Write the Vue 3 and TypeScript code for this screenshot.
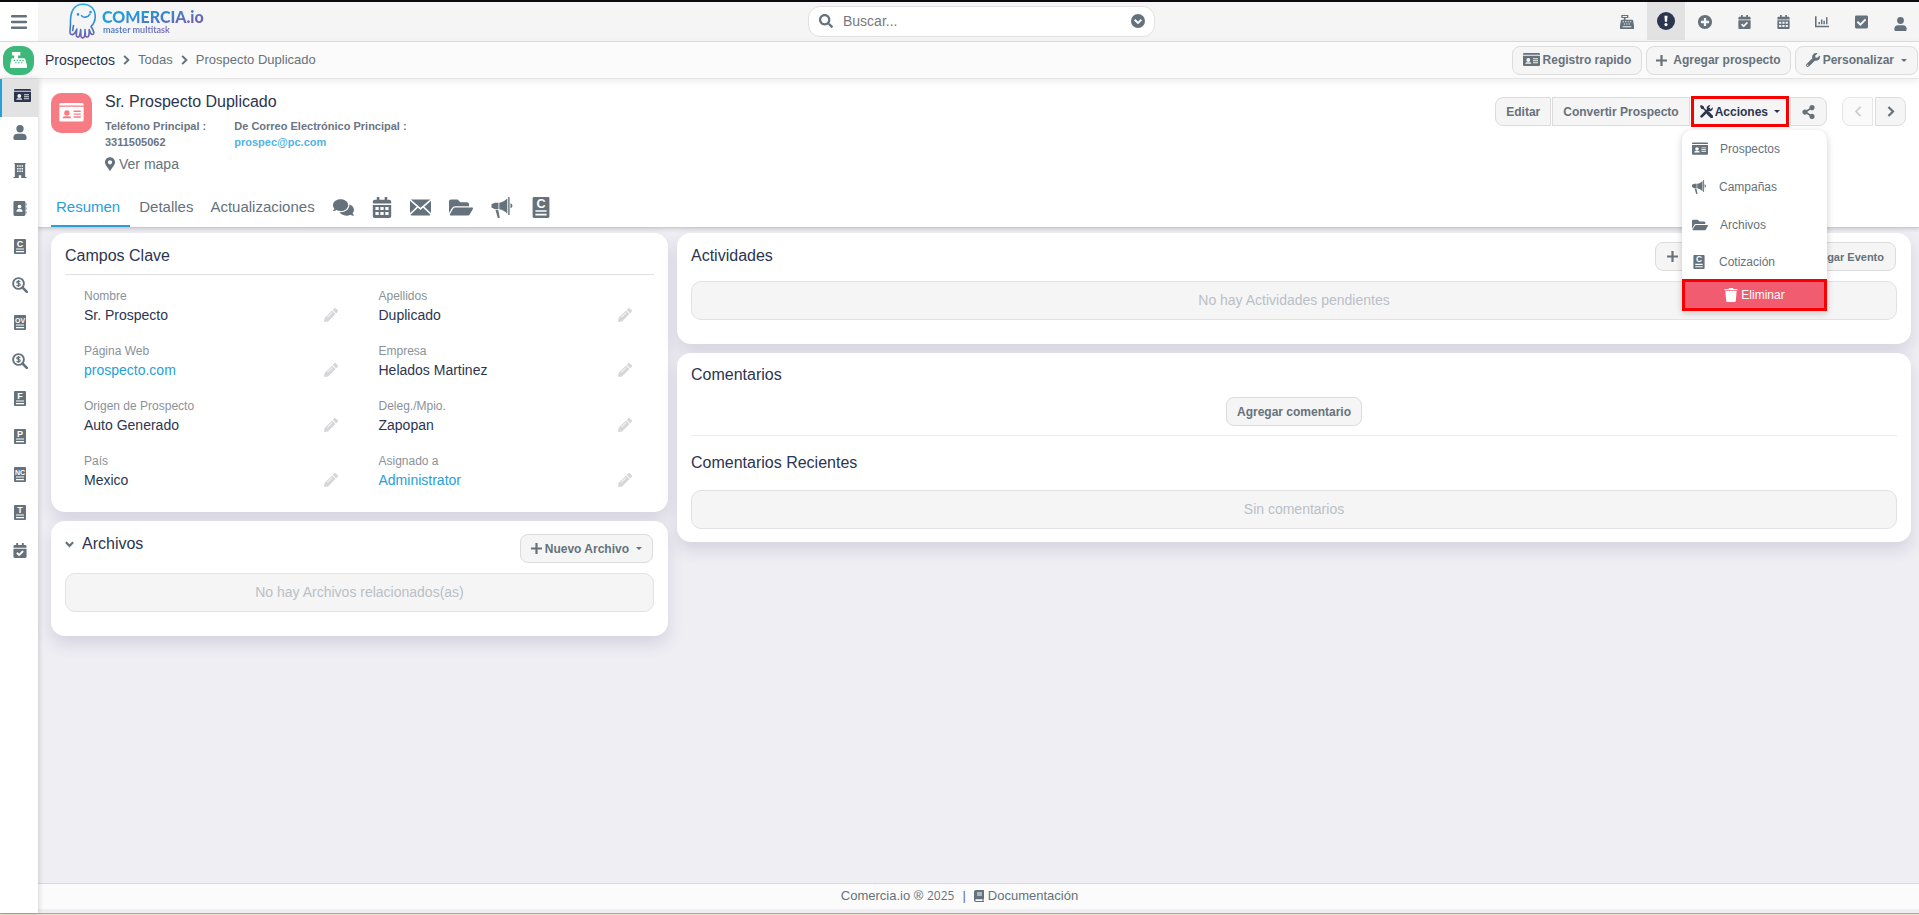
<script setup lang="ts">
import { h, ref } from 'vue'

interface Glyph { box: string; body: string }

const doc = (letters: string, size: number): Glyph => ({
  box: '0 0 12 15',
  body: `<path d="M1 0h10a1 1 0 0 1 1 1v13a1 1 0 0 1-1 1H1a1 1 0 0 1-1-1V1a1 1 0 0 1 1-1z"/><path d="M2 9.4h8v1.2H2zM2 12h8v1.2H2z" fill="#fff"/><text x="6" y="7.8" text-anchor="middle" font-family="Liberation Sans, Arial, sans-serif" font-weight="700" font-size="${size}" fill="#fff">${letters}</text>`,
})

const glyphs: Record<string, Glyph> = {
  menu: { box: '0 0 16 14', body: '<path d="M1 0h14a1 1 0 0 1 0 2.5H1A1 1 0 0 1 1 0zM1 5.7h14a1 1 0 0 1 0 2.5H1a1 1 0 0 1 0-2.5zM1 11.4h14a1 1 0 0 1 0 2.5H1a1 1 0 0 1 0-2.5z"/>' },
  search: { box: '0 0 512 512', body: '<path d="M505 442.7L405.3 343c-4.5-4.5-10.6-7-17-7H372c27.6-35.3 44-79.7 44-128C416 93.1 322.9 0 208 0S0 93.1 0 208s93.1 208 208 208c48.3 0 92.7-16.4 128-44v16.3c0 6.4 2.5 12.5 7 17l99.7 99.7c9.4 9.4 24.6 9.4 33.9 0l28.3-28.3c9.4-9.4 9.4-24.6.1-34zM208 336c-70.7 0-128-57.2-128-128 0-70.7 57.2-128 128-128 70.7 0 128 57.2 128 128 0 70.7-57.2 128-128 128z"/>' },
  searchMoney: { box: '0 0 16 16', body: '<circle cx="6.5" cy="6.5" r="5.4" fill="none" stroke="currentColor" stroke-width="1.9"/><path d="M10.6 10.6l4.2 4.2" stroke="currentColor" stroke-width="2.6" stroke-linecap="round"/><path d="M8.3 4.9c-.4-.6-1-.8-1.8-.8-1.1 0-1.8.5-1.8 1.2 0 1.6 3.6.7 3.6 2.4 0 .8-.8 1.2-1.8 1.2-.9 0-1.6-.3-1.9-1M6.5 3v7" fill="none" stroke="currentColor" stroke-width="1.2"/>' },
  circleDown: { box: '0 0 16 16', body: '<circle cx="8" cy="8" r="8"/><path d="M4.2 6.6L8 10.3l3.8-3.7" fill="none" stroke="#fff" stroke-width="2.2"/>' },
  register: { box: '0 0 16 16', body: '<path fill-rule="evenodd" d="M1.5 0h8v3.4H6.3v1.9H14c.5 0 .8.3.9.8L16 12v3c0 .6-.4 1-1 1H1c-.6 0-1-.4-1-1v-3l1.1-5.9c.1-.5.4-.8.9-.8h2.4V3.400H1.500zM3 1.200v1h5v-1zM3 7.100v1.300h1.400V7.100zM5.800 7.100v1.300h1.400V7.100zM8.600 7.100v1.300H10V7.100zM11.400 7.100v1.300h1.400V7.100zM4.400 9.600v1.300h1.400V9.600zM7.200 9.600v1.300h1.400V9.600zM10 9.600v1.300h1.400V9.600zM3 12.800v1.200h10v-1.200z"/>' },
  registerWhite: { box: '0 0 18 17', body: '<path fill-rule="evenodd" d="M2 0h9v3.600H8.500v3H15c.6 0 1 .3 1.100.9L18 14v2c0 .6-.4 1-1 1H1c-.6 0-1-.4-1-1v-2l1.500-6.500c.1-.6.500-.9 1.100-.9h1.900v-3H2zM4 8.300v1.200h1.500V8.300zM7 8.300v1.200h1.500V8.300zM10 8.300v1.200h1.500V8.300zM13 8.300v1.200h1.500V8.300zM5.500 10.800V12H7v-1.200zM8.500 10.800V12H10v-1.200zM11.500 10.800V12H13v-1.200z"/>' },
  alert: { box: '0 0 18 18', body: '<circle cx="9" cy="9" r="9"/><path d="M7.500 3.800h3l-.4 6H7.900z" fill="#fff"/><circle cx="9" cy="12.600" r="1.600" fill="#fff"/>' },
  plusCircle: { box: '8 8 496 496', body: '<path d="M256 8C119 8 8 119 8 256s111 248 248 248 248-111 248-248S393 8 256 8zm144 276c0 6.600-5.400 12-12 12h-92v92c0 6.600-5.400 12-12 12h-56c-6.600 0-12-5.400-12-12v-92h-92c-6.600 0-12-5.400-12-12v-56c0-6.600 5.400-12 12-12h92v-92c0-6.600 5.400-12 12-12h56c6.600 0 12 5.400 12 12v92h92c6.600 0 12 5.400 12 12v56z"/>' },
  calCheck: { box: '0 0 448 512', body: '<path d="M436 160H12c-6.600 0-12-5.400-12-12v-36c0-26.500 21.500-48 48-48h48V12c0-6.600 5.400-12 12-12h40c6.600 0 12 5.400 12 12v52h128V12c0-6.600 5.400-12 12-12h40c6.600 0 12 5.400 12 12v52h48c26.500 0 48 21.500 48 48v36c0 6.600-5.400 12-12 12zM12 192h424c6.600 0 12 5.400 12 12v260c0 26.500-21.500 48-48 48H48c-26.500 0-48-21.500-48-48V204c0-6.600 5.400-12 12-12zm333.300 95.900l-28.200-28.400c-4.600-4.700-12.200-4.700-16.900 0L194.100 364.700l-46-46.400c-4.600-4.700-12.200-4.700-16.900 0l-28.400 28.100c-4.700 4.700-4.700 12.300-.1 17l82.600 83.300c4.700 4.700 12.300 4.700 17 0l143-141.800c4.700-4.700 4.700-12.300 0-17z"/>' },
  calendar: { box: '0 0 448 512', body: '<path fill-rule="evenodd" d="M12 160h424c6.600 0 12-5.400 12-12v-36c0-26.500-21.500-48-48-48h-48V12c0-6.600-5.400-12-12-12h-40c-6.600 0-12 5.400-12 12v52H160V12c0-6.600-5.400-12-12-12h-40c-6.600 0-12 5.400-12 12v52H48C21.500 64 0 85.500 0 112v36c0 6.600 5.400 12 12 12zM0 192h448v272c0 26.500-21.500 48-48 48H48c-26.500 0-48-21.500-48-48zM64 246v72h80v-72zM184 246v72h80v-72zM304 246v72h80v-72zM64 366v72h80v-72zM184 366v72h80v-72zM304 366v72h80v-72z"/>' },
  chart: { box: '0 0 16 13', body: '<path d="M0 0h1.800v10.800H16V12.600H0zM4 6.600h1.700V9H4zM6.800 3.600h1.700V9H6.800zM9.600 5h1.700v4H9.600zM12.600 1h1.700v8h-1.700z"/>' },
  checkSquare: { box: '0 32 448 448', body: '<path d="M400 480H48c-26.500 0-48-21.500-48-48V80c0-26.500 21.500-48 48-48h352c26.500 0 48 21.500 48 48v352c0 26.500-21.500 48-48 48zm-204.700-98.100l184-184c6.200-6.200 6.200-16.300 0-22.600l-22.600-22.600c-6.300-6.300-16.400-6.300-22.700 0L184 302.700l-70.100-70c-6.200-6.300-16.300-6.300-22.600 0l-22.600 22.600c-6.300 6.300-6.300 16.400 0 22.600l104 104c6.300 6.300 16.400 6.300 22.600 0z"/>' },
  user: { box: '0 0 14 16', body: '<circle cx="7" cy="4" r="3.900"/><path d="M4 9.400h6c2.400 0 4 1.600 4 3.800v1.300c0 .8-.6 1.500-1.500 1.500h-11C.6 16 0 15.300 0 14.500v-1.300c0-2.200 1.600-3.800 4-3.800z"/>' },
  building: { box: '0 0 14 16', body: '<path fill-rule="evenodd" d="M1 0h12v1h-.5v14H14v1H8.300v-3H5.700v3H0v-1h1.500V1H1zM3.900 2.500V4h1.500V2.500zM6.300 2.500V4h1.500V2.500zM8.700 2.500V4h1.500V2.500zM3.900 5.300v1.500h1.500V5.300zM6.300 5.300v1.500h1.500V5.300zM8.700 5.300v1.500h1.500V5.300zM3.900 8.100v1.500h1.500V8.100zM6.300 8.100v1.500h1.500V8.100zM8.700 8.100v1.500h1.500V8.100z"/>' },
  addressBook: { box: '0 0 14 16', body: '<path d="M1.500 0h9.800c.8 0 1.500.7 1.500 1.500v13c0 .8-.7 1.500-1.500 1.500H1.500C.7 16 0 15.300 0 14.500v-13C0 .7.700 0 1.500 0zM13.200 2.500h.5c.4 0 .4 2.500 0 2.500h-.5zM13.200 6.700h.5c.4 0 .4 2.500 0 2.500h-.5zM13.200 11h.5c.4 0 .4 2.500 0 2.500h-.5z"/><circle cx="6.500" cy="5.900" r="2" fill="#fff"/><path d="M3.200 11.500c0-1.900 1.300-2.900 2.400-2.900h1.800c1.100 0 2.400 1 2.400 2.900z" fill="#fff"/>' },
  card: { box: '0 0 17 14', body: '<path fill-rule="evenodd" d="M1 0h15a1 1 0 0 1 1 1v.7H0V1a1 1 0 0 1 1-1zM0 2.700h17V12a1 1 0 0 1-1 1H1a1 1 0 0 1-1-1zM3.600 9.200c-.8.200-1.300.7-1.300 1.500h6c0-.8-.5-1.300-1.300-1.500zM10 5.300v1h5v-1zM10 7.300v1h5v-1zM10 9.300v1h5v-1z"/><circle cx="5.300" cy="7" r="1.900" class="knock"/>' },
  docC: doc('C', 9),
  docOV: doc('OV', 7),
  docF: doc('F', 9),
  docP: doc('P', 9),
  docNC: doc('NC', 7),
  docT: doc('T', 9),
  plus: { box: '0 0 13 13', body: '<path d="M5.200 0h2.600v5.200H13v2.600H7.800V13H5.200V7.800H0V5.200h5.200z"/>' },
  wrench: { box: '0 0 512 512', body: '<path d="M507.700 109.100c-2.200-9-13.500-12.100-20.100-5.500l-74.400 74.400-67.800-11.400-11.400-67.800 74.400-74.400c6.600-6.600 3.400-17.900-5.700-20.200-47.400-11.700-99.500.9-136.600 38-39.600 39.600-50.500 97.100-34 147.200L18.700 402.800c-25 25-25 65.500 0 90.500s65.500 25 90.500 0l213.300-213.200c50.100 16.700 107.400 5.700 147.300-34.200 37.100-37.100 49.700-89.400 37.900-136.800zM64 472c-13.300 0-24-10.800-24-24 0-13.300 10.800-24 24-24s24 10.700 24 24c0 13.200-10.700 24-24 24z"/>' },
  tools: { box: '0 0 13 13', body: '<path d="M1.800 1.800l9.400 9.400" stroke="currentColor" stroke-width="1.500"/><path d="M8 8l3.600 3.600" stroke="currentColor" stroke-width="3.200" stroke-linecap="round"/><path d="M0 1l1-1 2.600 1.300.5 1.700-1.200 1.200-1.700-.5z"/><path d="M1.600 11.400L9 4" stroke="currentColor" stroke-width="2.600" stroke-linecap="round"/><path d="M12.700 2.300l-2 2-1.700-.3-.3-1.700 2-2C9.300 0 7.600.3 6.900 1.900c-.5 1.200-.2 2.400.6 3.300s2.300 1.200 3.500.7c1.600-.7 2.100-2.300 1.700-3.600z"/>' },
  share: { box: '0 0 448 512', body: '<path d="M352 320c-22.600 0-43.400 7.800-59.800 20.900l-102.500-64.100a96.600 96.600 0 0 0 0-41.600l102.500-64.100C308.600 184.200 329.400 192 352 192c53 0 96-43 96-96S405 0 352 0s-96 43-96 96c0 7.200.8 14.100 2.300 20.800l-102.500 64.100C139.400 167.800 118.600 160 96 160c-53 0-96 43-96 96s43 96 96 96c22.600 0 43.400-7.800 59.800-20.900l102.500 64.100A96.300 96.300 0 0 0 256 416c0 53 43 96 96 96s96-43 96-96-43-96-96-96z"/>' },
  left: { box: '0 0 8 12', body: '<path d="M6.800 1L1.800 6l5 5" fill="none" stroke="currentColor" stroke-width="1.800"/>' },
  right: { box: '0 0 8 12', body: '<path d="M1.200 1l5 5-5 5" fill="none" stroke="currentColor" stroke-width="2.400"/>' },
  down: { box: '0 0 10 7', body: '<path d="M1 1l4 4 4-4" fill="none" stroke="currentColor" stroke-width="2.400"/>' },
  marker: { box: '0 0 384 512', body: '<path d="M172.300 501.700C27 291 0 269.400 0 192 0 86 86 0 192 0s192 86 192 192c0 77.400-27 99-172.300 309.700-9.500 13.700-29.900 13.700-39.400 0zM192 272c44.200 0 80-35.800 80-80s-35.800-80-80-80-80 35.800-80 80 35.800 80 80 80z"/>' },
  comments: { box: '0 32 576 448', body: '<path d="M416 192c0-88.400-93.100-160-208-160S0 103.600 0 192c0 34.300 14.100 65.900 38 92-13.400 30.200-35.500 54.200-35.800 54.500-2.200 2.300-2.800 5.700-1.500 8.700S4.800 352 8 352c36.600 0 66.900-12.300 88.700-25 32.200 15.700 70.300 25 111.300 25 114.900 0 208-71.600 208-160zm122 220c23.900-26 38-57.700 38-92 0-66.900-53.500-124.200-129.300-148.100.9 6.600 1.300 13.300 1.300 20.100 0 105.900-107.700 192-240 192-10.800 0-21.300-.8-31.700-1.900C207.800 439.600 281.800 480 368 480c41 0 79.100-9.200 111.300-25 21.800 12.700 52.100 25 88.700 25 3.200 0 6.100-1.900 7.300-4.800 1.300-2.900.7-6.300-1.500-8.700-.3-.3-22.400-24.200-35.800-54.500z"/>' },
  envelope: { box: '0 0 21 16', body: '<path d="M.8 0h19.400L10.500 8.300zM0 1.200l6.700 6L0 13.400zM21 1.200v12.200l-6.700-6.200zM7.900 8.200l2.600 2.200 2.600-2.200 7.400 7.100c-.2.400-.6.700-1.100.7H1.600c-.5 0-.9-.3-1.100-.7z"/>' },
  folder: { box: '0 64 576 384', body: '<path d="M572.700 292.100l-72.400 124.100A64 64 0 0 1 445 448H45c-18.500 0-30-20.100-20.700-36.100l72.400-124.100A64 64 0 0 1 152 256h400c18.500 0 30 20.100 20.700 36.100zM152 224h328v-48c0-26.500-21.500-48-48-48H272l-64-64H48C21.500 64 0 85.500 0 112v278l69.100-118.400C86.200 242.300 118 224 152 224z"/>' },
  bullhorn: { box: '0 0 21 21', body: '<path d="M3.500 5.800H7v6.500H3.500L0 10.500V7.300zM7.800 5.800c3-.5 5.700-2 8-4.300v15.200c-2.300-2.300-5-3.800-8-4.400zM16.700 0h1.400v18h-1.400zM19 6.300c2.600.8 2.600 4.300 0 5zM4 13h2.700l1.600 7.800-2 .2z"/>' },
  pencil: { box: '0 0 512 512', body: '<path fill-rule="evenodd" d="M497.900 142.100l-46.100 46.100c-4.700 4.700-12.300 4.700-17 0l-111-111c-4.700-4.700-4.700-12.300 0-17l46.100-46.100c18.700-18.700 49.100-18.700 67.900 0l60.100 60.100c18.800 18.700 18.800 49.100 0 67.900zM284.200 99.800L21.600 362.400.4 483.900c-2.900 16.400 11.400 30.600 27.800 27.800l121.500-21.300 262.600-262.600c4.700-4.700 4.700-12.300 0-17l-111-111c-4.800-4.700-12.400-4.700-17.100 0zM124.100 339.900c-5.500-5.500-5.500-14.300 0-19.800l154-154c5.500-5.500 14.300-5.500 19.800 0s5.500 14.300 0 19.800l-154 154c-5.500 5.500-14.300 5.500-19.800 0z"/>' },
  trash: { box: '0 0 14 15', body: '<path d="M5 0h4l.6 1H14v1.500H0V1h4.400zM1 3.300h12l-.8 10.400c-.1.800-.6 1.300-1.400 1.300H3.200c-.8 0-1.300-.5-1.400-1.300z"/>' },
  book: { box: '0 0 10 12', body: '<path fill-rule="evenodd" d="M2 0h7.500c.3 0 .5.200.5.500V9l-.5.500V11h.5v1H2c-1.100 0-2-.9-2-2V2C0 .9.900 0 2 0zM3 2.500v1h5v-1zM3 4.500v1h5v-1zM2 9.300c-.9 0-.9 1.600 0 1.600h6.500V9.300z"/>' },
}

const Icon = (props: { name: string }) =>
  h('svg', {
    class: ['icon', 'i-' + props.name],
    viewBox: glyphs[props.name].box,
    fill: 'currentColor',
    'aria-hidden': 'true',
    innerHTML: glyphs[props.name].body,
  })
Icon.props = ['name']

const modules = [
  ['card', 'Prospectos'], ['user', 'Contactos'], ['building', 'Cuentas'], ['addressBook', 'Agenda'],
  ['docC', 'Cotizaciones'], ['searchMoney', 'Oportunidades'], ['docOV', 'Órdenes de venta'],
  ['searchMoney', 'Pagos'], ['docF', 'Facturas'], ['docP', 'Pedidos'], ['docNC', 'Notas de crédito'],
  ['docT', 'Tickets'], ['calCheck', 'Tareas'],
]
const tools = [
  ['register', 'Punto de venta'], ['alert', 'Avisos'], ['plusCircle', 'Crear'], ['calCheck', 'Tareas'],
  ['calendar', 'Calendario'], ['chart', 'Reportes'], ['checkSquare', 'Pendientes'], ['user', 'Usuario'],
]
const relatedTabs = [
  ['comments', 'Comentarios'], ['calendar', 'Actividades'], ['envelope', 'Correos'],
  ['folder', 'Archivos'], ['bullhorn', 'Campañas'], ['docC', 'Cotización'],
]
const menuItems = [
  ['card', 'Prospectos'], ['bullhorn', 'Campañas'], ['folder', 'Archivos'], ['docC', 'Cotización'],
]
const fields = [
  { label: 'Nombre', value: 'Sr. Prospecto' },
  { label: 'Apellidos', value: 'Duplicado' },
  { label: 'Página Web', value: 'prospecto.com', link: true },
  { label: 'Empresa', value: 'Helados Martinez' },
  { label: 'Origen de Prospecto', value: 'Auto Generado' },
  { label: 'Deleg./Mpio.', value: 'Zapopan' },
  { label: 'País', value: 'Mexico' },
  { label: 'Asignado a', value: 'Administrator', link: true },
]

const query = ref('')
const menuOpen = ref(true)
</script>

<template>
  <div class="page">
    <div class="strip-top"></div>
    <header class="topbar">
      <button class="burger" aria-label="Menú"><Icon name="menu" /></button>
      <a class="brand" href="#">
        <svg class="squid" viewBox="0 0 30 36" fill="none" stroke="url(#ink)" stroke-width="1.600" stroke-linecap="round" stroke-linejoin="round" aria-hidden="true">
          <defs>
            <linearGradient id="ink" x1="0" y1="0" x2="0" y2="36" gradientUnits="userSpaceOnUse">
              <stop offset="0" stop-color="#25b0e6" /><stop offset=".55" stop-color="#2f86cc" /><stop offset="1" stop-color="#7a5cb0" />
            </linearGradient>
          </defs>
          <path d="M3.500 21C3 9 6.500 1.200 16 1.200c8 0 12.300 5.500 12.200 12.500 0 4.300-1.500 7.300-4.200 9.800 1.700 2.500 3 4.800 2.800 6.700-.3 1.800-2.800 1.600-3.300-.2l-1.300-3.500c-.2 3 .2 5.300-.7 6.800-.9 1.300-2.900.8-3.100-.9l-.4-5.900c-.1 3.500.2 6-1 7.700-1.100 1.200-3 .6-3.100-1.300l-.2-6.400c-.5 3.200-.5 5.500-1.600 7-1.100 1.200-2.900.3-2.800-1.400l.5-6c-1 2.600-2.200 5-4.200 5.500-2.200.2-2.800-1.200-2.600-3.300z" />
          <path d="M14.500 12.600c1.500 2.300 6.300 2.300 8.200-1.300M6.500 22.500l-.8 5" />
          <path d="M11 11.200v.3M23.500 9v.3" stroke-width="2.600" />
        </svg>
        <span class="brand-text">
          <span class="brand-name">COMERCIA.io</span>
          <span class="brand-sub">master multitask</span>
        </span>
      </a>
      <div class="search">
        <Icon name="search" />
        <input v-model="query" type="text" placeholder="Buscar..." aria-label="Buscar" />
        <button aria-label="Búsqueda avanzada"><Icon name="circleDown" /></button>
      </div>
      <nav class="tools">
        <button v-for="t in tools" :key="t[1]" :class="{ on: t[0] === 'alert' }" :aria-label="t[1]"><Icon :name="t[0]" /></button>
      </nav>
    </header>

    <div class="crumbbar">
      <span class="badge"><Icon name="registerWhite" /></span>
      <nav class="crumbs">
        <a class="first" href="#">Prospectos</a><Icon name="right" />
        <a href="#">Todas</a><Icon name="right" />
        <span>Prospecto Duplicado</span>
      </nav>
      <div class="crumb-actions">
        <button class="btn"><Icon name="card" />Registro rapido</button>
        <button class="btn wide"><Icon name="plus" />Agregar prospecto</button>
        <button class="btn"><Icon name="wrench" />Personalizar<i class="caret"></i></button>
      </div>
    </div>

    <div class="body">
      <nav class="sidebar">
        <a v-for="(m, i) in modules" :key="i" href="#" :class="{ on: i === 0 }" :aria-label="m[1]"><Icon :name="m[0]" /></a>
      </nav>

      <div class="content">
        <section class="record">
          <div class="record-top">
            <span class="avatar"><Icon name="card" /></span>
            <div class="identity">
              <h1>Sr. Prospecto Duplicado</h1>
              <div class="contact">
                <div><span>Teléfono Principal :</span><span>3311505062</span></div>
                <div><span>De Correo Electrónico Principal :</span><a href="#">prospec@pc.com</a></div>
              </div>
              <a class="map" href="#"><Icon name="marker" />Ver mapa</a>
            </div>
            <div class="record-actions">
              <div class="group">
                <button class="btn">Editar</button>
                <button class="btn">Convertir Prospecto</button>
                <div class="dropdown">
                  <button class="btn marked" :aria-expanded="menuOpen" @click="menuOpen = !menuOpen"><Icon name="tools" />Acciones<i class="caret"></i></button>
                  <div v-if="menuOpen" class="menu">
                    <a v-for="m in menuItems" :key="m[1]" href="#"><Icon :name="m[0]" />{{ m[1] }}</a>
                    <button class="delete"><Icon name="trash" />Eliminar</button>
                  </div>
                </div>
                <button class="btn" aria-label="Compartir"><Icon name="share" /></button>
              </div>
              <div class="group pager">
                <button class="btn" disabled aria-label="Anterior"><Icon name="left" /></button>
                <button class="btn" aria-label="Siguiente"><Icon name="right" /></button>
              </div>
            </div>
          </div>
          <nav class="tabs">
            <a class="on" href="#">Resumen</a>
            <a href="#">Detalles</a>
            <a href="#">Actualizaciones</a>
            <span class="related">
              <a v-for="t in relatedTabs" :key="t[1]" href="#" :aria-label="t[1]"><Icon :name="t[0]" /></a>
            </span>
          </nav>
        </section>

        <main class="columns">
          <div class="column">
            <section class="panel keyfields">
              <h2>Campos Clave</h2>
              <dl>
                <div v-for="f in fields" :key="f.label">
                  <dt>{{ f.label }}</dt>
                  <dd><a v-if="f.link" href="#">{{ f.value }}</a><template v-else>{{ f.value }}</template></dd>
                  <button :aria-label="'Editar ' + f.label"><Icon name="pencil" /></button>
                </div>
              </dl>
            </section>
            <section class="panel files">
              <div class="panel-head">
                <h2><Icon name="down" />Archivos</h2>
                <button class="btn"><Icon name="plus" />Nuevo Archivo<i class="caret"></i></button>
              </div>
              <p class="empty">No hay Archivos relacionados(as)</p>
            </section>
          </div>
          <div class="column">
            <section class="panel activities">
              <div class="panel-head">
                <h2>Actividades</h2>
                <div class="buttons">
                  <button class="btn small"><Icon name="plus" />Agregar Tarea</button>
                  <button class="btn small"><Icon name="plus" />Agregar Evento</button>
                </div>
              </div>
              <p class="empty">No hay Actividades pendientes</p>
            </section>
            <section class="panel comments">
              <h2>Comentarios</h2>
              <div class="add"><button class="btn">Agregar comentario</button></div>
              <h2 class="recent">Comentarios Recientes</h2>
              <p class="empty">Sin comentarios</p>
            </section>
          </div>
        </main>

        <footer class="footer">
          <span>Comercia.io ® <small>2025</small></span>
          <span>|</span>
          <a href="#"><Icon name="book" />Documentación</a>
        </footer>
      </div>
    </div>
    <div class="strip-bottom"></div>
  </div>
</template>

<style>
body { background: #efeef3; }
.i-card .knock { fill: var(--knock, #f5f5f5); }
</style>

<style scoped>
.page {
  min-height: 100vh;
  display: flex;
  flex-direction: column;
  font-family: "Liberation Sans", Arial, sans-serif;
  font-size: 14px;
  line-height: 18px;
  color: #65727c;
  background: #efeef3;
}
.page *, .page { box-sizing: border-box; }
a { color: inherit; text-decoration: none; }
button { font: inherit; color: inherit; background: none; border: 0; padding: 0; cursor: pointer; }
h1, h2, p, dl, dd { margin: 0; font-weight: 400; }
.icon { display: block; flex: none; width: 15px; height: 15px; }
.strip-top { height: 2px; background: #0d0a0f; }
.strip-bottom { height: 2px; background: #e9e3c6; border-top: 1px solid #b3a69a; }

.topbar { display: flex; align-items: stretch; height: 40px; background: #f5f5f5; border-bottom: 1px solid #dedede; }
.burger { width: 38px; display: flex; align-items: center; justify-content: center; background: #fff; }
.burger .icon { width: 16px; height: 14px; }
.brand { display: flex; flex: 1; margin-left: 29px; gap: 5px; }
.squid { width: 30px; height: 36px; margin-top: 1px; }
.brand-text { display: flex; flex-direction: column; padding-top: 7px; font-family: Lato, "Liberation Sans", sans-serif; }
.brand-name, .brand-sub { align-self: flex-start; color: transparent; background-clip: text; -webkit-background-clip: text; }
.brand-name { font-size: 16px; line-height: 16px; font-weight: 900; background-image: linear-gradient(165deg, #1e9edb 25%, #6a62b4 85%); }
.brand-sub { font-size: 9px; line-height: 10px; font-weight: 700; margin-left: 1px; background-image: linear-gradient(90deg, #4a7fc4, #7c6bb8); }
.search { width: 347px; height: 31px; margin-top: 4px; padding: 0 9px 2px 10px; display: flex; align-items: center; gap: 10px; background: #fff; border: 1px solid #e0e0e0; border-radius: 12px; }
.search .i-search, .search .i-circleDown { width: 14px; height: 14px; }
.search input { flex: 1; min-width: 0; border: 0; outline: 0; padding: 0; background: none; font: inherit; color: inherit; }
.search input::placeholder { color: #77797c; opacity: 1; }
.tools { flex: 1; display: flex; justify-content: flex-end; gap: 1px; margin-left: 23px; }
.tools button { width: 38px; height: 38px; display: flex; align-items: center; justify-content: center; }
.tools button.on { background: #e2e2e2; color: #2c3550; }
.tools .icon { width: 13px; height: 14px; margin-top: 2px; }
.tools .i-alert { width: 18px; height: 18px; margin-top: 0; }
.tools .i-register, .tools .i-chart { width: 14px; }
.tools .i-plusCircle { width: 14px; }
.tools .i-user { margin-top: 5px; }

.crumbbar { display: flex; align-items: center; height: 37px; padding: 0 1px 0 3px; background: #fbfbfb; border-bottom: 1px solid #e4e4e4; box-shadow: 0 2px 8px rgba(0, 0, 0, 0.08); position: relative; }
.badge { display: flex; align-items: center; justify-content: center; width: 31px; height: 29px; border-radius: 12px; background: #3cb87b; color: #fff; }
.badge .icon { width: 17px; height: 16px; }
.crumbs { display: flex; align-items: center; margin-left: 11px; font-size: 13px; flex: 1; }
.crumbs .first { font-size: 14px; color: #2c3550; }
.crumbs .icon { width: 7px; height: 10px; margin: 0 8px; }
.crumb-actions { display: flex; gap: 4px; }

.btn { display: inline-flex; align-items: center; justify-content: center; gap: 3px; height: 29px; padding: 0 10px; font-size: 12px; font-weight: 700; line-height: 16px; color: #65727c; background: #f5f5f5; border: 1px solid #dcdcdc; border-radius: 8px; white-space: nowrap; }
.btn.small { font-size: 11px; gap: 5px; }
.btn .icon { width: 14px; height: 14px; }
.btn .i-card { width: 17px; height: 14px; }
.btn .i-plus { width: 11px; height: 11px; }
.btn.wide { gap: 6px; padding: 0 9px; }
.caret { width: 0; height: 0; margin-left: 4px; border: 3px solid transparent; border-top-color: currentColor; border-bottom: 0; }

.body { flex: 1; display: flex; }
.sidebar { width: 38px; flex: none; display: flex; flex-direction: column; background: #fff; box-shadow: 1px 0 5px rgba(0, 0, 0, 0.16); position: relative; }
.sidebar a { height: 38px; padding: 8px 0 0 13px; color: #65727c; }
.sidebar .icon { width: 14px; height: 15px; }
.sidebar .i-searchMoney { margin-left: -1px; width: 16px; height: 16px; }
.sidebar a.on { background: #e2e2e2; border-left: 2px solid #26a0da; color: #2c3550; padding: 10px 0 0 12px; }
.sidebar a.on .icon { width: 17px; height: 14px; }

.content { flex: 1; min-width: 0; display: flex; flex-direction: column; }
.record { background: #fff; border-bottom: 1px solid #ccc; box-shadow: 0 1px 4px rgba(0, 0, 0, 0.16); padding: 14px 13px 0; }
.record-top { display: flex; align-items: flex-start; }
.avatar { display: flex; align-items: center; justify-content: center; width: 41px; height: 40px; border-radius: 10px; background: #f77b83; color: #fff; --knock: #f77b83; }
.avatar .icon { width: 25px; height: 20px; }
.identity { margin-left: 13px; flex: 1; }
h1 { font-size: 16px; line-height: 18px; color: #2c3550; }
.contact { display: flex; gap: 28px; margin-top: 7px; font-size: 11px; font-weight: 700; line-height: 16px; color: #6b7583; }
.contact span, .contact a { display: block; }
.contact a { color: #4fb4e4; }
.map { display: flex; align-items: center; gap: 4px; width: fit-content; margin-top: 5px; }
.map .icon { width: 10px; height: 14px; }
.record-actions { display: flex; gap: 15px; margin-top: 3px; }
.group { display: flex; gap: 1px; align-items: center; }
.group .btn { border-radius: 0; }
.group > .btn:first-child { border-radius: 8px 0 0 8px; }
.group > .btn:last-child { border-radius: 0 8px 8px 0; }
.group:not(.pager) > .btn:last-child { padding: 0 11px; }
.group .i-share { width: 13px; }
.pager { gap: 2px; }
.pager .btn { width: 31px; padding: 0; }
.pager .icon { width: 8px; height: 11px; }
.pager .btn:disabled { color: #c5ccd2; background: #fafafa; border-color: #e6e6e6; }
.dropdown { position: relative; }
.group .btn.marked { height: 31px; padding: 0 6px; border: 3px solid #f80000; color: #2c3550; gap: 2px; }
.btn .i-tools { width: 13px; height: 13px; }
.menu { position: absolute; z-index: 5; top: 34px; right: -38px; width: 145px; background: #fff; border-radius: 10px 10px 0 0; box-shadow: 0 2px 7px rgba(0, 0, 0, 0.2); font-size: 12px; line-height: 16px; --knock: #fff; }
.menu a { display: flex; align-items: center; gap: 12px; height: 38px; padding-left: 10px; }
.menu a:nth-child(4) { height: 35px; }
.menu .icon { width: 14px; height: 14px; margin-right: 1px; }
.menu .i-card, .menu .i-folder { width: 16px; margin-right: 0; }
.menu .i-docC { margin: 0 0 0 -1px; width: 16px; }
.delete { display: flex; align-items: center; justify-content: center; gap: 3px; width: 100%; height: 32px; background: #f15c70; color: #fff; border: 3px solid #f80000; }
.menu .i-trash { margin: 0; }

.tabs { display: flex; height: 42px; margin-top: 12px; font-size: 15px; }
.tabs a { display: flex; align-items: center; padding-top: 2px; }
.tabs > a { padding: 2px 8px 0 9px; }
.tabs > a.on { color: #26a0da; border-bottom: 2px solid #26a0da; padding: 4px 10px 0 5px; }
.related { display: flex; gap: 18px; margin-left: 10px; }
.related .icon { width: 21px; height: 21px; }
.related .i-calendar, .related .i-docC { width: 20px; }
.related .i-folder { width: 24px; }
.related .i-bullhorn { width: 22px; }

.columns { flex: 1; display: grid; grid-template-columns: minmax(0, 1fr) minmax(0, 2fr); gap: 9px; align-items: start; padding: 5px 8px 9px 13px; }
.column { display: flex; flex-direction: column; gap: 9px; }
.panel { background: #fff; border-radius: 14px; padding: 13px 14px; box-shadow: 0 8px 16px rgba(80, 70, 120, 0.16); }
h2 { font-size: 16px; line-height: 18px; color: #2c3550; display: flex; align-items: center; }
.panel.keyfields { padding: 14px 14px 11px; }
.keyfields h2 { padding-bottom: 9px; border-bottom: 1px solid #e0e0e0; }
dl { display: grid; grid-template-columns: 1fr 1fr; padding-top: 6px; }
dl > div { height: 55px; display: grid; grid-template-columns: 1fr auto; align-content: start; padding: 6px 22px 0 19px; }
dt { grid-column: 1 / 3; font-size: 12px; line-height: 18px; color: #8a9299; }
dd { line-height: 20px; color: #2c3550; }
dd a { color: #26a0da; }
dl button { color: #d5d7da; align-self: center; }
dl .icon { width: 14px; height: 14px; }
.panel-head { display: flex; justify-content: space-between; }
.panel-head .btn { margin-right: 1px; }
.files.panel { padding-bottom: 24px; }
.files h2 { align-self: flex-start; padding-top: 1px; }
.files h2 .icon { width: 9px; height: 7px; margin-right: 8px; color: #65727c; }
.buttons { display: flex; gap: 4px; }
.empty { height: 39px; display: flex; align-items: center; justify-content: center; padding-bottom: 2px; background: #f5f5f5; border: 1px solid #e2e2e2; border-radius: 10px; color: #b9c0c7; }
.files .empty { margin-top: 10px; }
.panel.activities { padding: 9px 14px 24px; }
.activities h2 { align-self: flex-start; padding-top: 5px; }
.activities .btn { padding: 0 11px; }
.activities .empty { margin-top: 10px; }
.comments .add { display: flex; justify-content: center; padding: 13px 0 9px; border-bottom: 1px solid #ebebeb; }
.comments .recent { padding: 18px 0; }

.footer { display: flex; align-items: center; justify-content: center; gap: 8px; height: 26px; margin-bottom: 4px; padding: 0 38px 2px 0; font-size: 13px; background: #fbfbfb; border-top: 1px solid #dadada; }
.footer small { font-family: "Open Sans", sans-serif; font-size: 12px; }
.footer a { display: flex; align-items: center; gap: 4px; }
.footer .icon { width: 10px; height: 12px; }
</style>
